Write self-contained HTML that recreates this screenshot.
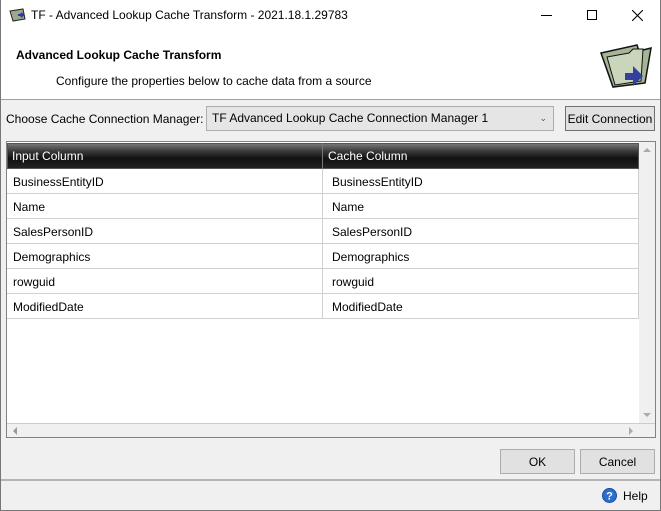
<!DOCTYPE html>
<html><head><style>
*{box-sizing:border-box;margin:0;padding:0}
body{width:661px;height:511px;background:#f0f0f0;font-family:"Liberation Sans",sans-serif;font-size:12px;color:#000;position:relative;overflow:hidden}
.abs{position:absolute}
#frame{left:0;top:0;width:661px;height:511px;border:1px solid #777;border-top:none}
#title{left:1px;top:0;width:659px;height:31px;background:#fff}
#hdr{left:1px;top:31px;width:659px;height:69px;background:#fff;border-bottom:1px solid #a0a0a0}
.cell{position:absolute;height:25px;line-height:24px;font-size:12px;padding-left:6px;border-bottom:1px solid #d0d0d0;background:#fff}
.btn{position:absolute;background:#e1e1e1;border:1px solid #adadad;text-align:center;line-height:23px;font-size:12px}
</style></head><body>
<div id="frame" class="abs"></div>
<div id="title" class="abs">
 <svg class="abs" style="left:8px;top:8px" width="18" height="14" viewBox="0 0 18 14"><path d="M1 3 L14 1 L16 11 L4 13 Z" fill="#9aa88e" stroke="#222"/><path d="M9 7h5l-2-2M14 7l-2 2" stroke="#33a" stroke-width="2" fill="none"/></svg>
 <div class="abs" style="left:30px;top:8px;font-size:12px">TF - Advanced Lookup Cache Transform - 2021.18.1.29783</div>
 <div class="abs" style="left:540px;top:15px;width:11px;height:1px;background:#000"></div>
 <div class="abs" style="left:586px;top:10px;width:10px;height:10px;border:1px solid #000"></div>
 <svg class="abs" style="left:631px;top:10px" width="11" height="11"><path d="M0 0L11 11M11 0L0 11" stroke="#000" stroke-width="1.1"/></svg>
</div>
<div id="hdr" class="abs">
 <div class="abs" style="left:15px;top:17px;font-weight:bold;font-size:12px">Advanced Lookup Cache Transform</div>
 <div class="abs" style="left:55px;top:43px;font-size:12px">Configure the properties below to cache data from a source</div>
 <svg class="abs" style="left:598px;top:12px" width="54" height="46" viewBox="0 0 54 46">
  <path d="M2 10 L38 2 L40 8 L52 5 L46 40 L14 44 Z" fill="#a6b596" stroke="#111" stroke-width="1.5"/>
  <path d="M8 14 L30 10 L34 6 L44 6 L42 38 L16 42 Z" fill="#c9d6bb" stroke="#111" stroke-width="1"/>
  <path d="M26 30 h8 v-7 l10 10 l-10 10 v-6 h-8 z" fill="#3340a0"/>
 </svg>
</div>
<div class="abs" style="left:6px;top:112px;font-size:12px">Choose Cache Connection Manager:</div>
<div class="abs" style="left:206px;top:106px;width:348px;height:25px;background:#e5e5e5;border:1px solid #adadad;padding-left:5px;line-height:23px;font-size:12px">TF Advanced Lookup Cache Connection Manager 1<span style="position:absolute;right:6px;top:0;font-size:9px;color:#555">&#8964;</span></div>
<div class="btn" style="left:565px;top:106px;width:90px;height:25px;line-height:25px;border-color:#707070">Edit Connection</div>
<div class="abs" style="left:6px;top:141px;width:650px;height:297px;background:#fff;border:1px solid #828282">
 <div class="abs" style="left:0;top:1px;width:632px;height:26px;background:linear-gradient(#777 0%,#3a3a3a 30%,#111 60%,#222 100%);border:1px solid #555"></div>
 <div class="abs" style="left:315px;top:1px;width:1px;height:26px;background:#777"></div>
 <div class="abs" style="left:5px;top:7px;color:#fff;font-size:12px">Input Column</div>
 <div class="abs" style="left:321px;top:7px;color:#fff;font-size:12px">Cache Column</div>
 <div class="abs" style="left:632px;top:0;width:16px;height:281px;background:#f0f0f0"><div style="position:absolute;left:4px;top:6px;border:4px solid transparent;border-bottom:4px solid #aaa;border-top:none"></div><div style="position:absolute;left:4px;bottom:6px;border:4px solid transparent;border-top:4px solid #aaa;border-bottom:none"></div></div>
 <div class="abs" style="left:0;top:281px;width:648px;height:14px;background:#f0f0f0;border-top:1px solid #ccc"><div style="position:absolute;left:6px;top:3px;border:4px solid transparent;border-right:4px solid #999;border-left:none"></div><div style="position:absolute;left:622px;top:3px;border:4px solid transparent;border-left:4px solid #aaa;border-right:none"></div></div>
</div>
<div class="abs" style="left:7px;top:169px">
 <div class="cell" style="left:0;top:0;width:316px;border-right:1px solid #d0d0d0;line-height:26px">BusinessEntityID</div><div class="cell" style="left:316px;top:0;width:316px;padding-left:9px;border-right:1px solid #d0d0d0;line-height:26px">BusinessEntityID</div>
 <div class="cell" style="left:0;top:25px;width:316px;border-right:1px solid #d0d0d0;line-height:26px">Name</div><div class="cell" style="left:316px;top:25px;width:316px;padding-left:9px;border-right:1px solid #d0d0d0;line-height:26px">Name</div>
 <div class="cell" style="left:0;top:50px;width:316px;border-right:1px solid #d0d0d0;line-height:26px">SalesPersonID</div><div class="cell" style="left:316px;top:50px;width:316px;padding-left:9px;border-right:1px solid #d0d0d0;line-height:26px">SalesPersonID</div>
 <div class="cell" style="left:0;top:75px;width:316px;border-right:1px solid #d0d0d0;line-height:26px">Demographics</div><div class="cell" style="left:316px;top:75px;width:316px;padding-left:9px;border-right:1px solid #d0d0d0;line-height:26px">Demographics</div>
 <div class="cell" style="left:0;top:100px;width:316px;border-right:1px solid #d0d0d0;line-height:26px">rowguid</div><div class="cell" style="left:316px;top:100px;width:316px;padding-left:9px;border-right:1px solid #d0d0d0;line-height:26px">rowguid</div>
 <div class="cell" style="left:0;top:125px;width:316px;border-right:1px solid #d0d0d0;line-height:26px">ModifiedDate</div><div class="cell" style="left:316px;top:125px;width:316px;padding-left:9px;border-right:1px solid #d0d0d0;line-height:26px">ModifiedDate</div>
</div>
<div class="btn" style="left:500px;top:449px;width:75px;height:25px;line-height:25px">OK</div>
<div class="btn" style="left:580px;top:449px;width:75px;height:25px;line-height:25px">Cancel</div>
<div class="abs" style="left:1px;top:479px;width:659px;height:2px;background:#b4b4b4"></div>
<svg class="abs" style="left:602px;top:488px" width="15" height="15"><circle cx="7.5" cy="7.5" r="7" fill="#2a6fd0" stroke="#1a4a9a"/><text x="7.5" y="11.5" font-size="11" font-weight="bold" fill="#fff" text-anchor="middle" font-family="Liberation Sans">?</text></svg>
<div class="abs" style="left:623px;top:489px;font-size:12px">Help</div>
</body></html>
